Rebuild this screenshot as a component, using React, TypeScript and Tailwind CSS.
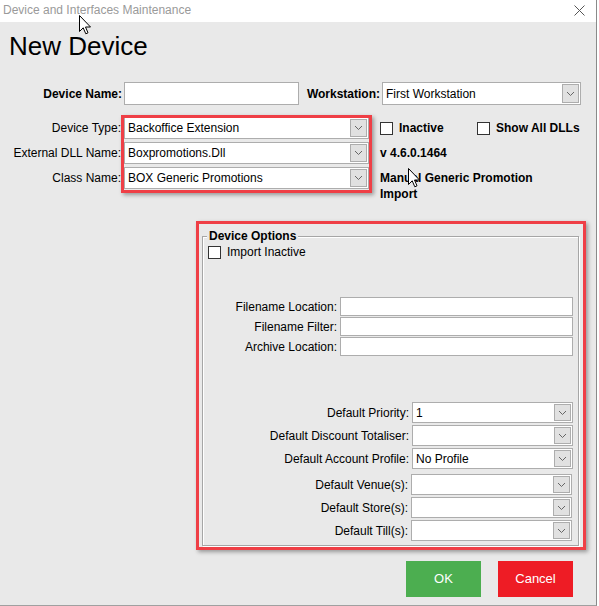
import React from "react";

function Chevron() {
  return (
    <svg width="9" height="6" viewBox="0 0 9 6">
      <polyline points="1,1 4.5,4.5 8,1" fill="none" stroke="#666" strokeWidth="1" />
    </svg>
  );
}

function Select({ value, className }: { value?: string; className: string }) {
  return (
    <div className={`flex items-stretch bg-white border border-[#adadad] ${className}`}>
      <span className="flex flex-1 items-center pl-[3px] whitespace-nowrap overflow-hidden">{value}</span>
      <span className="my-[1px] mr-[1px] flex w-[17px] items-center justify-center border border-[#adadad] bg-[#e1e1e1]">
        <Chevron />
      </span>
    </div>
  );
}

function Box() {
  return <span className="inline-block h-[13px] w-[13px] border border-[#333] bg-white" />;
}

function Cursor() {
  return (
    <svg width="13" height="20" viewBox="0 0 13 20">
      <path d="M0.5 0.5 L0.5 16.5 L4.2 12.8 L6.8 18.8 L9 17.8 L6.5 12 L11.5 12 Z" fill="white" stroke="black" strokeWidth="1" strokeLinejoin="miter" />
    </svg>
  );
}

export default function App() {
  return (
    <div className="relative h-[606px] w-[599px] bg-white font-['Liberation_Sans',Arial,sans-serif] text-[12px] text-black">
      <div className="flex h-[606px] w-[597px] flex-col border-r border-b border-r-[#8a8a8a] border-b-[#a0a0a0]">
        {/* Title bar */}
        <div className="flex h-[22px] items-start justify-between bg-white pl-[3px] pr-[11px] pt-[3px]">
          <span className="leading-[14px] text-[#9a9a9a]">Device and Interfaces Maintenance</span>
          <svg width="11" height="11" viewBox="0 0 11 11" className="mt-[2px]">
            <line x1="0.5" y1="0.5" x2="10.5" y2="10.5" stroke="#555" strokeWidth="1" />
            <line x1="10.5" y1="0.5" x2="0.5" y2="10.5" stroke="#555" strokeWidth="1" />
          </svg>
        </div>

        {/* Body */}
        <div className="flex flex-1 flex-col bg-[#e9e9e9]">
          <h1 className="pl-[9px] pt-[9px] text-[26px] leading-[30px]">New Device</h1>

          {/* Device name row */}
          <div className="mt-[21px] flex items-center">
            <span className="w-[122px] text-right font-bold">Device Name:</span>
            <span className="ml-[2px] h-[23px] w-[175px] border border-[#adadad] bg-white" />
            <span className="w-[81px] text-right font-bold">Workstation:</span>
            <Select value="First Workstation" className="ml-[2px] h-[23px] w-[199px]" />
          </div>

          {/* Device type section */}
          <div className="mt-[12px] flex items-start">
            <div className="flex w-[121px] flex-col gap-[3px] text-right">
              <span className="flex h-[22px] items-center justify-end">Device Type:</span>
              <span className="flex h-[22px] items-center justify-end">External DLL Name:</span>
              <span className="flex h-[22px] items-center justify-end">Class Name:</span>
            </div>
            <div className="relative ml-[3px] flex w-[245px] flex-col gap-[3px]">
              <Select value="Backoffice Extension" className="h-[22px] w-full" />
              <Select value="Boxpromotions.Dll" className="h-[22px] w-full" />
              <Select value="BOX Generic Promotions" className="h-[22px] w-full" />
              <div className="pointer-events-none absolute -bottom-[4px] -left-[3px] -right-[3px] -top-[2px] border-[3px] border-[#ef3f46] shadow-[2px_2px_4px_rgba(0,0,0,0.35)]" />
            </div>
            <div className="ml-[11px] flex flex-col font-bold">
              <div className="flex h-[22px] items-center">
                <div className="flex w-[97px] items-center">
                  <Box />
                  <span className="ml-[6px]">Inactive</span>
                </div>
                <div className="flex items-center">
                  <Box />
                  <span className="ml-[6px]">Show All DLLs</span>
                </div>
              </div>
              <div className="mt-[3px] flex h-[22px] items-center">v 4.6.0.1464</div>
              <div className="mt-[6px] w-[160px] leading-[16px]">Manual Generic Promotion Import</div>
            </div>
          </div>

          {/* Device options */}
          <div className="ml-[196px] mt-[19px] flex h-[329px] w-[390px] flex-col border-[3px] border-[#ef3f46] pb-[1px] pl-[3px] pr-[4px] pt-[12px] shadow-[2px_2px_4px_rgba(0,0,0,0.35)]">
            <div className="relative flex flex-1 flex-col border border-[#a6a6a6] shadow-[inset_1px_1px_0_#fff,1px_1px_0_#fff]">
              <span className="absolute -top-[9px] left-[4px] bg-[#e9e9e9] px-[2px] font-bold leading-[16px]">Device Options</span>
              <div className="ml-[5px] mt-[9px] flex items-center">
                <Box />
                <span className="ml-[6px] leading-[13px]">Import Inactive</span>
              </div>

              <div className="mt-[38px] flex flex-col gap-[1px] pr-[5px]">
                {["Filename Location:", "Filename Filter:", "Archive Location:"].map((l) => (
                  <div key={l} className="flex items-center justify-end">
                    <span>{l}</span>
                    <span className="ml-[3px] h-[19px] w-[233px] border border-[#adadad] bg-white" />
                  </div>
                ))}
              </div>

              <div className="mt-[46px] flex flex-col gap-[2px] pr-[5px]">
                {[
                  ["Default Priority:", "1"],
                  ["Default Discount Totaliser:", ""],
                  ["Default Account Profile:", "No Profile"],
                ].map(([l, v]) => (
                  <div key={l} className="flex items-center justify-end">
                    <span>{l}</span>
                    <Select value={v} className="ml-[3px] h-[21px] w-[161px]" />
                  </div>
                ))}
              </div>

              <div className="mt-[5px] flex flex-col gap-[2px] pr-[6px]">
                {["Default Venue(s):", "Default Store(s):", "Default Till(s):"].map((l) => (
                  <div key={l} className="flex items-center justify-end">
                    <span>{l}</span>
                    <Select value="" className="ml-[3px] h-[21px] w-[161px]" />
                  </div>
                ))}
              </div>
            </div>
          </div>

          {/* Buttons */}
          <div className="ml-[406px] mt-[11px] flex gap-[17px]">
            <button className="flex h-[36px] w-[75px] items-center justify-center bg-[#4cae50] text-[13px] text-white">OK</button>
            <button className="flex h-[36px] w-[75px] items-center justify-center bg-[#ee1c25] text-[13px] text-white">Cancel</button>
          </div>
        </div>
      </div>

      {/* mouse cursors */}
      <div className="absolute left-[79px] top-[15px]">
        <Cursor />
      </div>
      <div className="absolute left-[408px] top-[168px]">
        <Cursor />
      </div>
    </div>
  );
}
